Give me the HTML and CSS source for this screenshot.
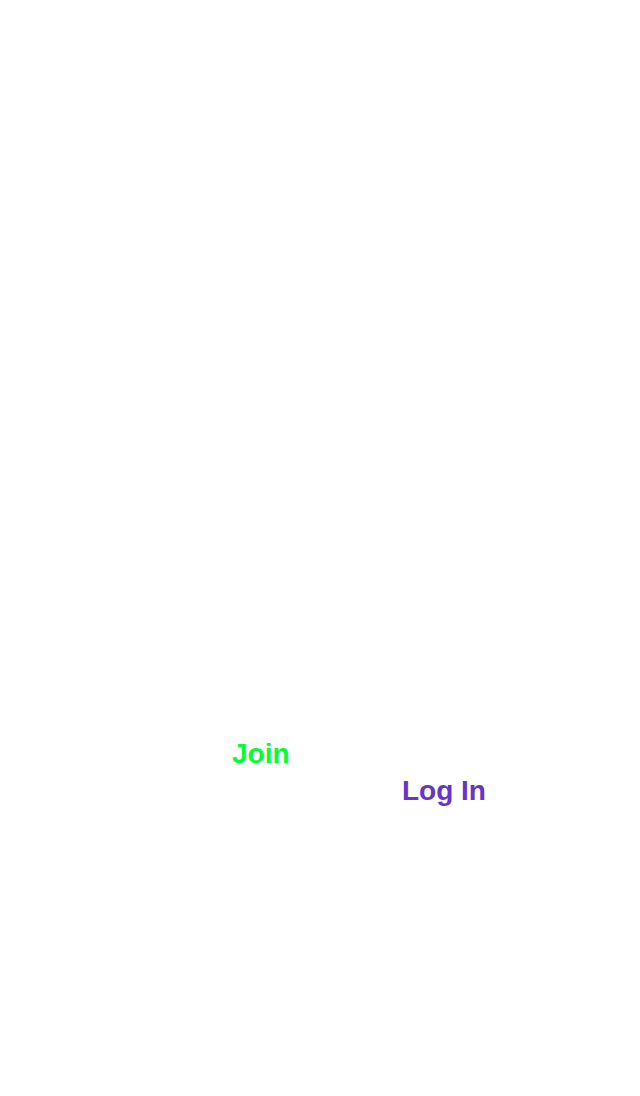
FILE: index.html
```html
<!DOCTYPE html>
<html lang="en">
<head>
<meta charset="utf-8">
<title>Welcome</title>
<link rel="stylesheet" href="styles.css">
</head>
<body>
<main class="screen">
  <nav class="actions">
    <a class="action join" href="#">Join</a>
    <a class="action login" href="#">Log In</a>
  </nav>
</main>
</body>
</html>
```
FILE: styles.css
```css
html, body {
  margin: 0;
  padding: 0;
  background: #ffffff;
}
.screen {
  width: 640px;
  height: 1096px;
  box-sizing: border-box;
  padding-top: 735px;
  font-family: "Liberation Sans", Arial, sans-serif;
}
.actions {
  display: flex;
  flex-direction: column;
  align-items: flex-start;
}
.action {
  font-size: 28px;
  font-weight: 700;
  line-height: 37px;
  text-decoration: none;
}
.join {
  color: #00ff33;
  margin-left: 232px;
}
.login {
  color: #6633cc;
  margin-left: 402px;
}
```
